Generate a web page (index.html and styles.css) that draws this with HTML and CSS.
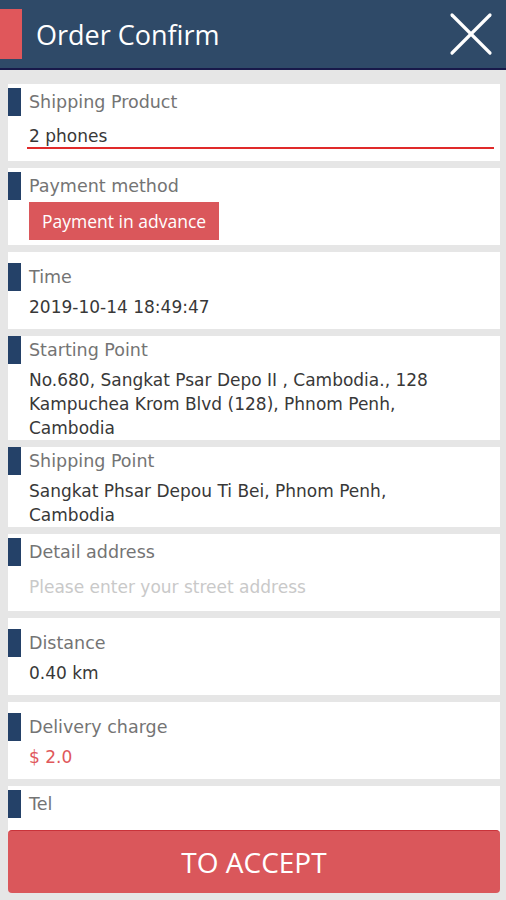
FILE: index.html
```html
<!DOCTYPE html>
<html lang="en">
<head>
<meta charset="UTF-8">
<title>Order Confirm</title>
<link rel="stylesheet" href="styles.css">
</head>
<body>

<div class="header">
  <div class="header-mark"></div>
  <h1 class="title">Order Confirm</h1>
  <svg class="close" width="44" height="44" viewBox="0 0 44 44">
    <line x1="3" y1="3" x2="41" y2="41" stroke="#fff" stroke-width="3.2" stroke-linecap="round"/>
    <line x1="41" y1="3" x2="3" y2="41" stroke="#fff" stroke-width="3.2" stroke-linecap="round"/>
  </svg>
</div>

<div class="list">
  <div class="card top">
    <div class="label"><span class="mark"></span>Shipping Product</div>
    <div class="input underline">2 phones</div>
  </div>

  <div class="card top">
    <div class="label"><span class="mark"></span>Payment method</div>
    <div class="pay">Payment in advance</div>
  </div>

  <div class="card">
    <div class="label"><span class="mark"></span>Time</div>
    <div class="value">2019-10-14 18:49:47</div>
  </div>

  <div class="card">
    <div class="label"><span class="mark"></span>Starting Point</div>
    <div class="value">No.680, Sangkat Psar Depo II , Cambodia., 128 Kampuchea Krom Blvd (128), Phnom Penh, Cambodia</div>
  </div>

  <div class="card">
    <div class="label"><span class="mark"></span>Shipping Point</div>
    <div class="value">Sangkat Phsar Depou Ti Bei, Phnom Penh, Cambodia</div>
  </div>

  <div class="card top">
    <div class="label"><span class="mark"></span>Detail address</div>
    <div class="input placeholder">Please enter your street address</div>
  </div>

  <div class="card">
    <div class="label"><span class="mark"></span>Distance</div>
    <div class="value">0.40 km</div>
  </div>

  <div class="card">
    <div class="label"><span class="mark"></span>Delivery charge</div>
    <div class="value price">$ 2.0</div>
  </div>

  <div class="card top">
    <div class="label"><span class="mark"></span>Tel</div>
    <div class="input placeholder"></div>
  </div>
</div>

<button class="accept">TO ACCEPT</button>

</body>
</html>
```

FILE: styles.css
```css
body { margin: 0; background: #e6e6e6; font-family: "DejaVu Sans", Verdana, sans-serif; }

.header { height: 68px; background: #2f4a68; border-bottom: 2px solid #18194a; display: flex; align-items: center; font-family: "Open Sans", Arial, sans-serif; }
.header-mark { width: 22px; height: 50px; background: #e0575b; margin-right: 14px; }
.title { flex: 1; margin: 0; font-size: 27px; font-weight: 400; color: #fff; }
.close { margin-right: 13px; }

.list { display: flex; flex-direction: column; gap: 7px; padding: 14px 6px 120px 8px; }
.card { background: #fff; min-height: 77px; display: flex; flex-direction: column; justify-content: center; gap: 4px; }
.card.top { justify-content: flex-start; padding-top: 4px; box-sizing: border-box; gap: 0; }

.label { display: flex; align-items: center; height: 28px; font-size: 17.5px; color: #747474; }
.mark { width: 13px; height: 28px; background: #244168; margin-right: 8px; }

.value { padding: 0 40px 0 21px; font-size: 17px; line-height: 24px; color: #383838; }
.value.price { color: #e0585b; }

.input { margin: 0 6px 0 19px; padding-left: 2px; height: 31px; line-height: 40px; font-size: 17px; color: #383838; }
.input.underline { border-bottom: 2px solid #e02a2a; }
.input.placeholder { color: #c9c9c9; height: 40px; line-height: 42px; }

.pay { align-self: flex-start; margin: 2px 0 0 21px; padding: 0 13px; height: 38px; line-height: 38px; background: #da575b; color: #fff; font-family: "Open Sans", Arial, sans-serif; font-size: 17.5px; }

.accept { position: fixed; left: 8px; right: 6px; bottom: 7px; height: 63px; border: none; border-top: 1px solid #c9333a; border-radius: 4px; background: #da575b; color: #fff; font-family: "Open Sans", Arial, sans-serif; font-size: 28px; }
```
